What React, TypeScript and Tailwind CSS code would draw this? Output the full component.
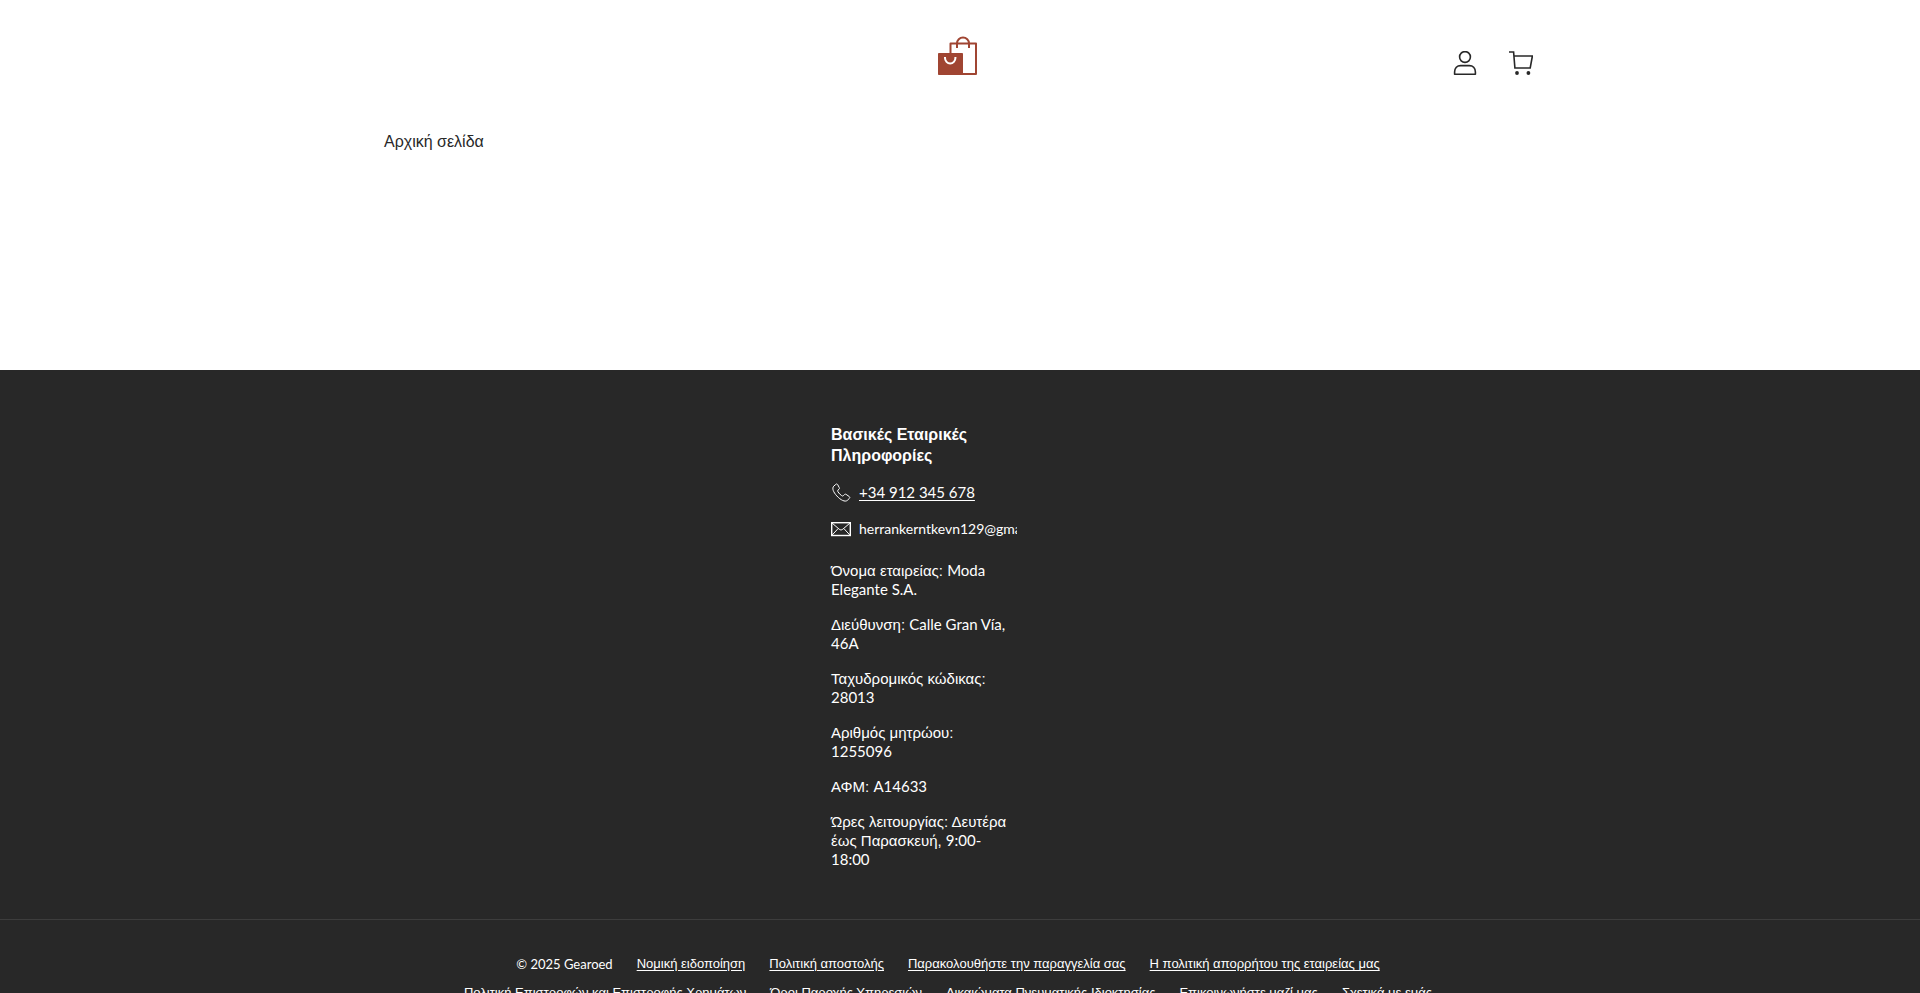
import type { ReactNode } from "react";

const greek = "font-['Liberation_Sans',sans-serif]";

function Latin({ children }: { children: ReactNode }) {
  return <span className="font-['Lato',sans-serif]">{children}</span>;
}

function Logo() {
  return (
    <svg className="h-10 w-10" viewBox="0 0 40 40" fill="none" aria-hidden="true">
      <path d="M12.5 18V7.5H38V38H24" stroke="#a04532" strokeWidth="2" strokeLinejoin="round" />
      <path d="M19 12V7.500a6 6 0 0 1 12 0V12" stroke="#a04532" strokeWidth="2" />
      <rect x="0" y="17" width="25" height="22" rx="0.8" fill="#a04532" />
      <path d="M7 21v1a5.200 5.500 0 0 0 10.400 0v-1" stroke="#fff" strokeWidth="2" />
    </svg>
  );
}

function UserIcon() {
  return (
    <svg className="h-6 w-6" viewBox="0 0 24 24" fill="none" stroke="#282828" strokeWidth="1.6" aria-hidden="true">
      <circle cx="12" cy="6" r="5.4" />
      <path d="M1.6 23.2V21c0-4 2.6-6.4 6-6.4h8.8c3.4 0 6 2.4 6 6.4v2.200z" strokeLinejoin="round" />
    </svg>
  );
}

function CartIcon() {
  return (
    <svg className="h-6 w-6" viewBox="0 0 24 24" fill="none" stroke="#282828" strokeWidth="1.6" aria-hidden="true">
      <path d="M0 1h4.6l1.3 16h15.3L23.4 5H5" />
      <circle cx="8" cy="22" r="1.9" fill="#282828" stroke="none" />
      <circle cx="19.4" cy="22" r="1.9" fill="#282828" stroke="none" />
    </svg>
  );
}

function PhoneIcon() {
  return (
    <svg className="h-5 w-5 shrink-0" viewBox="0 0 20 20" fill="none" stroke="#fff" strokeWidth="1" strokeLinejoin="round" aria-hidden="true">
      <path d="M4.8 2.400 2.700 4.200C.8 6.400 2.300 10 5.800 13.900c3.900 4.200 8.200 6.400 10.500 4.500l2.100-2c.6-.6.500-1.300-.1-1.800l-3.200-2.200c-.7-.4-1.300-.3-1.800.3l-.9 1c-.5.5-1.100.4-1.800-.1-1.400-1-2.700-2.300-3.700-3.900-.4-.7-.4-1.200.1-1.600l1-.9c.6-.5.600-1.100.2-1.700L6.600 2.500c-.5-.7-1.200-.7-1.800-.1z" />
    </svg>
  );
}

function MailIcon() {
  return (
    <svg className="h-5 w-5 shrink-0" viewBox="0 0 20 20" fill="none" stroke="#fff" aria-hidden="true">
      <rect x="0.7" y="3.7" width="18.6" height="12.8" strokeWidth="1.4" />
      <path d="M1 4l7.200 6.200c1.200 1 2.400 1 3.600 0L19 4M1 16.200l6-6.500M19 16.200l-6-6.500" strokeWidth="1" />
    </svg>
  );
}

const policies = [
  "Νομική ειδοποίηση",
  "Πολιτική αποστολής",
  "Παρακολουθήστε την παραγγελία σας",
  "Η πολιτική απορρήτου της εταιρείας μας",
  "Πολιτική Επιστροφών και Επιστροφής Χρημάτων",
  "Όροι Παροχής Υπηρεσιών",
  "Δικαιώματα Πνευματικής Ιδιοκτησίας",
  "Επικοινωνήστε μαζί μας",
  "Σχετικά με εμάς",
];

export default function App() {
  return (
    <div className={`${greek} bg-white text-[#282828]`}>
      <header className="mx-auto grid h-[120px] max-w-[1152px] grid-cols-3 items-center">
        <a href="#home" aria-label="Gearoed" className="col-start-2 justify-self-center pr-1 pb-2">
          <Logo />
        </a>
        <div className="flex justify-end gap-8 pt-[6px] pr-[3px]">
          <button type="button" aria-label="Λογαριασμός">
            <UserIcon />
          </button>
          <button type="button" aria-label="Καλάθι">
            <CartIcon />
          </button>
        </div>
      </header>

      <main className="mx-auto min-h-[250px] max-w-[1152px] pt-[10px]">
        <nav className="text-base leading-6">
          <a href="#home">Αρχική σελίδα</a>
        </nav>
      </main>

      <footer className="bg-[#282828] text-white">
        <section className="mx-auto w-[258px] pt-[54px] pr-[72px] pb-[50px] text-[15px] leading-[19px]">
          <h2 className="mb-4 text-base leading-[21px] font-bold">Βασικές Εταιρικές Πληροφορίες</h2>
          <div className="mb-[17px] flex items-center gap-2">
            <PhoneIcon />
            <a href="tel:+34912345678" className="underline underline-offset-2">
              <Latin>+34 912 345 678</Latin>
            </a>
          </div>
          <div className="mb-[22px] flex items-center gap-2">
            <MailIcon />
            <span className="min-w-0 overflow-hidden text-sm leading-[19px] whitespace-nowrap">
              <Latin>herrankerntkevn129@gmail.com</Latin>
            </span>
          </div>
          <div className="flex flex-col gap-4">
            <p>Όνομα εταιρείας: <Latin>Moda Elegante S.A.</Latin></p>
            <p>Διεύθυνση: <Latin>Calle Gran Vía, 46A</Latin></p>
            <p>Ταχυδρομικός κώδικας: <Latin>28013</Latin></p>
            <p>Αριθμός μητρώου: <Latin>1255096</Latin></p>
            <p>ΑΦΜ: <Latin>A14633</Latin></p>
            <p>Ώρες λειτουργίας: Δευτέρα έως Παρασκευή, <Latin>9:00-18:00</Latin></p>
          </div>
        </section>
        <div className="border-t border-[#3d3d3d] pt-[30px] pb-8">
          <ul className="mx-auto flex max-w-[1056px] flex-wrap justify-center text-[13px] leading-7">
            <li className="mr-6"><Latin>© 2025 Gearoed</Latin></li>
            {policies.map((name) => (
              <li key={name} className="mr-6">
                <a href="#policy" className="underline underline-offset-2">{name}</a>
              </li>
            ))}
          </ul>
        </div>
      </footer>
    </div>
  );
}
